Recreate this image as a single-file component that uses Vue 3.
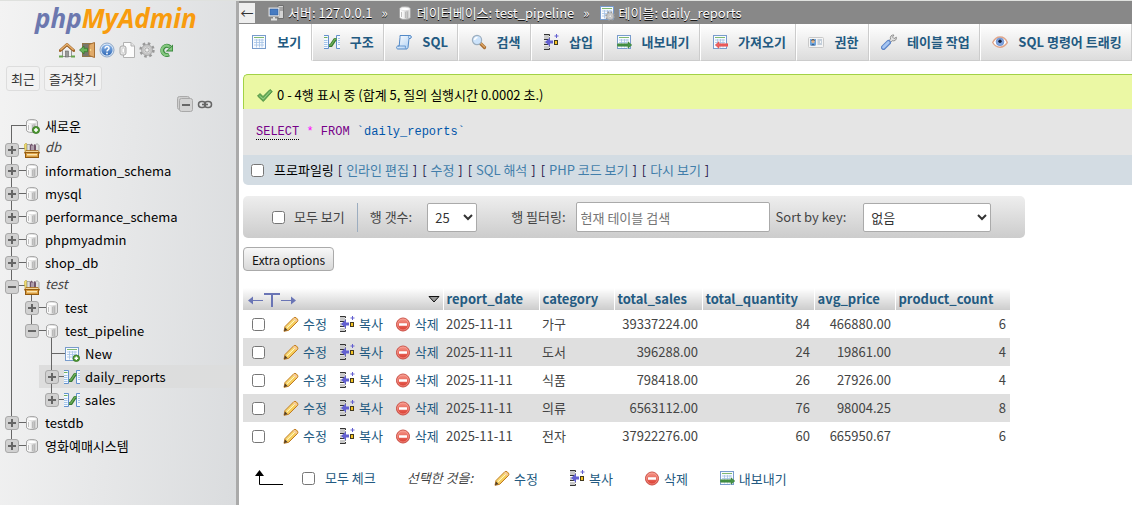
<script setup>
import { ref } from 'vue'

const tree = [
  { name: '새로운', icon: 'dbnew', level: 1, guides: ['start'] },
  { name: 'db', icon: 'group', level: 1, guides: ['full'], toggle: 'plus', group: true },
  { name: 'information_schema', icon: 'db', level: 1, guides: ['full'], toggle: 'plus' },
  { name: 'mysql', icon: 'db', level: 1, guides: ['full'], toggle: 'plus' },
  { name: 'performance_schema', icon: 'db', level: 1, guides: ['full'], toggle: 'plus' },
  { name: 'phpmyadmin', icon: 'db', level: 1, guides: ['full'], toggle: 'plus' },
  { name: 'shop_db', icon: 'db', level: 1, guides: ['full'], toggle: 'plus' },
  { name: 'test', icon: 'group', level: 1, guides: ['full'], toggle: 'minus', group: true, open: true },
  { name: 'test', icon: 'db', level: 2, guides: ['full', 'full'], toggle: 'plus' },
  { name: 'test_pipeline', icon: 'db', level: 2, guides: ['full', 'end'], toggle: 'minus', open: true },
  { name: 'New', icon: 'tablenew', level: 3, guides: ['full', 'none', 'full'] },
  { name: 'daily_reports', icon: 'structure', level: 3, guides: ['full', 'none', 'full'], toggle: 'plus', active: true },
  { name: 'sales', icon: 'structure', level: 3, guides: ['full', 'none', 'end'], toggle: 'plus' },
  { name: 'testdb', icon: 'db', level: 1, guides: ['full'], toggle: 'plus' },
  { name: '영화예매시스템', icon: 'db', level: 1, guides: ['end'], toggle: 'plus' },
]

const shortcuts = [
  { icon: 'home', label: '홈' },
  { icon: 'exit', label: '로그아웃' },
  { icon: 'help', label: '도움말' },
  { icon: 'docs', label: '문서' },
  { icon: 'gear', label: '설정' },
  { icon: 'reload', label: '새로고침' },
]

const tabs = [
  { label: '보기', icon: 'table', active: true },
  { label: '구조', icon: 'structure' },
  { label: 'SQL', icon: 'sql' },
  { label: '검색', icon: 'search' },
  { label: '삽입', icon: 'insert' },
  { label: '내보내기', icon: 'export' },
  { label: '가져오기', icon: 'import' },
  { label: '권한', icon: 'rights' },
  { label: '테이블 작업', icon: 'wrench' },
  { label: 'SQL 명령어 트래킹', icon: 'eye' },
]

const queryLinks = ['인라인 편집', '수정', 'SQL 해석', 'PHP 코드 보기', '다시 보기']

const actions = [
  { icon: 'pencil', label: '수정' },
  { icon: 'insert', label: '복사' },
  { icon: 'delete', label: '삭제' },
]
const bulkActions = [...actions, { icon: 'export', label: '내보내기' }]

const columns = ['report_date', 'category', 'total_sales', 'total_quantity', 'avg_price', 'product_count']
const rows = [
  ['2025-11-11', '가구', '39337224.00', '84', '466880.00', '6'],
  ['2025-11-11', '도서', '396288.00', '24', '19861.00', '4'],
  ['2025-11-11', '식품', '798418.00', '26', '27926.00', '4'],
  ['2025-11-11', '의류', '6563112.00', '76', '98004.25', '8'],
  ['2025-11-11', '전자', '37922276.00', '60', '665950.67', '6'],
]

const filter = ref('')
</script>

<template>
  <svg class="sprite" aria-hidden="true">
    <defs>
      <linearGradient id="g-cyl"><stop offset="0" stop-color="#fff" /><stop offset=".35" stop-color="#f4f4f4" /><stop offset=".7" stop-color="#bdbdbd" /><stop offset="1" stop-color="#f2f2f2" /></linearGradient>
      <linearGradient id="g-red" x2="0" y2="1"><stop offset="0" stop-color="#f79a8c" /><stop offset="1" stop-color="#d9362b" /></linearGradient>
      <linearGradient id="g-blue" x2="0" y2="1"><stop offset="0" stop-color="#8fb8ea" /><stop offset="1" stop-color="#2f68b5" /></linearGradient>
      <linearGradient id="g-scroll" x2="1" y2="1"><stop offset="0" stop-color="#fff" /><stop offset="1" stop-color="#a9cdf3" /></linearGradient>
      <linearGradient id="g-gold" x2="1" y2="1"><stop offset="0" stop-color="#fff0a0" /><stop offset="1" stop-color="#eeb32a" /></linearGradient>
    </defs>

    <symbol id="i-db" viewBox="0 0 16 16">
      <path d="M2.5 4C2.500 2.500 4.500 1.500 8 1.500S13.500 2.500 13.500 4V12C13.500 13.500 11.500 14.500 8 14.500S2.500 13.500 2.500 12Z" fill="url(#g-cyl)" stroke="#a5a5a5" />
      <ellipse cx="8" cy="4" rx="4.600" ry="1.700" fill="#fff" stroke="#d6d6d6" stroke-width=".6" />
      <path d="M8.500 7v6M10.500 7v6M4.500 7v5" stroke="#b3b3b3" stroke-width=".8" />
    </symbol>
    <symbol id="i-dbnew" viewBox="0 0 16 16">
      <use href="#i-db" width="16" height="16" />
      <circle cx="12" cy="12" r="3.600" fill="#4f9a33" stroke="#2f6e1d" stroke-width=".7" />
      <path d="M12 10v4M10 12h4" stroke="#fff" stroke-width="1.500" />
    </symbol>
    <symbol id="i-group" viewBox="0 0 16 16">
      <path d="M0 3L2 1L3 2V9H1Z" fill="#eedb70" stroke="#b09b33" stroke-width=".5" />
      <path d="M3 2.500H6V9H3ZM11.500 3L13 1.500L15 3.500V9H11.500Z" fill="#dedede" stroke="#8d8d8d" stroke-width=".7" />
      <path d="M6 3L7.500 1.500L9 3V9H6ZM9.500 3L11 2L12 4V9H9.500Z" fill="#71546b" />
      <path d="M8 3.500V9" stroke="#e7dfe7" />
      <path d="M2 8.500H14L16 11H0Z" fill="#f3d596" stroke="#a86b17" stroke-width=".8" />
      <rect x="1.500" y="10.500" width="13" height="5" fill="#d99c3f" stroke="#925a10" />
      <rect x="3" y="12" width="10" height="1.500" fill="#fbe5b0" />
    </symbol>
    <symbol id="i-table" viewBox="0 0 16 16">
      <rect x="1.500" y="1.500" width="13" height="13" fill="#f8fbff" stroke="#789ccc" />
      <path d="M3 3.500H13" stroke="#80b970" />
      <path d="M3 6H13M3 8.500H13M3 11H13M5.500 5V13.500M8.500 5V13.500M11 5V13.500" stroke="#a3c2e5" stroke-width=".8" />
    </symbol>
    <symbol id="i-tablenew" viewBox="0 0 16 16">
      <use href="#i-table" width="16" height="16" />
      <circle cx="12.300" cy="12.300" r="3.300" fill="#4f9a33" stroke="#2f6e1d" stroke-width=".7" />
      <path d="M12.300 10.500v3.600M10.500 12.300h3.600" stroke="#fff" stroke-width="1.400" />
    </symbol>
    <symbol id="i-tablegear" viewBox="0 0 16 16">
      <use href="#i-table" width="16" height="16" />
      <g transform="translate(6 6) scale(.65)"><use href="#i-gear" width="16" height="16" /></g>
    </symbol>
    <symbol id="i-structure" viewBox="0 0 16 16">
      <path d="M0 1.500H4.500V14.500H0" fill="#f4f9ff" stroke="#6391cc" />
      <path d="M16 1.500H12.500V14.500H16" fill="#f4f9ff" stroke="#6391cc" />
      <path d="M0 3.500H3.500" stroke="#70b15d" />
      <path d="M0 6.500H3.500M0 8.500H3.500M0 10.500H3.500M0 12.500H3.500M14 4.500H16M14 6.500H16M14 8.500H16M14 10.500H16" stroke="#8fb6e5" stroke-width=".8" />
      <path d="M5 11.500H7L11 5.500H12.500" fill="none" stroke="#37792f" stroke-width="3.200" stroke-linejoin="round" />
      <path d="M5 11.200H7L11 5.200H12.500" fill="none" stroke="#6fb35c" stroke-width="1.200" stroke-linejoin="round" />
    </symbol>
    <symbol id="i-sql" viewBox="0 0 16 16">
      <path d="M4 1.500H14C15.800 1.500 15.800 4.500 14 4.500H13L12 13.500C11.800 14.500 11 15 10 15H2C0 15 .2 12 2 12H3.200L4 3.500Z" fill="url(#g-scroll)" stroke="#5289c7" />
      <path d="M13 4.500C12.300 3.800 12.300 2.500 13.200 1.800M2 12H9.500C9.100 13 9.400 14.500 10.400 14.800" fill="none" stroke="#5289c7" stroke-width=".8" />
    </symbol>
    <symbol id="i-search" viewBox="0 0 16 16">
      <path d="M9.500 9.500L13.500 13.500" stroke="#a86d32" stroke-width="3.200" stroke-linecap="round" />
      <path d="M9.700 9.300L13.500 13" stroke="#dda664" stroke-width="1.300" stroke-linecap="round" />
      <circle cx="6" cy="6" r="4.600" fill="#cce3fb" stroke="#9caebf" stroke-width="1.200" />
      <path d="M3.500 6Q4 3.500 6.500 3.500" fill="none" stroke="#fff" stroke-width="1.500" />
    </symbol>
    <symbol id="i-insert" viewBox="0 0 16 16">
      <path d="M1 1H6V5H1ZM1 12H6V16H1ZM1 7H3V10H1Z" fill="#c9c9c9" />
      <path d="M1 .5H6.500V2M1 5.500H5M6.500 3.500V5M1 10.500H5M6.500 11V12.500M1 15.500H6.500V14" fill="none" stroke="#333" />
      <path d="M2 8L7 3.500V6.500H10V9.500H7V12.500Z" fill="#6260d0" />
      <rect x="11.500" y="6.500" width="3" height="4" fill="#f6c321" stroke="#433b22" />
      <path d="M13.500 0V4M11.500 2H15.500" stroke="#625fd0" />
    </symbol>
    <symbol id="i-export" viewBox="0 0 16 16">
      <use href="#i-table" width="16" height="16" />
      <path d="M1.500 9.500H11V7L15.800 11L11 15V12.500H1.500Z" fill="#fff" opacity=".75" />
      <path d="M1.500 9.800H12V7.800L15.800 11L12 14.200V12.200H1.500Z" fill="#469345" stroke="#28722d" stroke-width=".5" />
    </symbol>
    <symbol id="i-import" viewBox="0 0 16 16">
      <use href="#i-table" width="16" height="16" />
      <path d="M16 9.800V12.500H7.500V15L2.500 11.200L7.500 7.500V9.800Z" fill="#fff" opacity=".75" />
      <path d="M16 9.800V12.200H7V14.300L3.300 11L7 7.700V9.800Z" fill="#ef5f5f" stroke="#d13b3b" stroke-width=".5" />
    </symbol>
    <symbol id="i-rights" viewBox="0 0 16 16">
      <rect x=".5" y="3.500" width="15" height="10" rx="1" fill="#f5f5f5" stroke="#c9c9c9" />
      <rect x="2" y="5" width="6" height="6.500" fill="#6ea4dc" />
      <circle cx="5" cy="7.500" r="1.600" fill="#e5b384" /><path d="M3.500 6.500Q5 4.500 6.500 6.500" stroke="#65421f" fill="none" /><path d="M3 11.500Q5 8 7 11.500Z" fill="#345e91" />
      <path d="M9.500 6H14M9.500 8H12M13 8H14M9.500 10H14" stroke="#91a8c0" />
    </symbol>
    <symbol id="i-wrench" viewBox="0 0 16 16">
      <path d="M7 7.500L9.500 5C8.700 2.700 10.500.5 13 1L11.500 3L13 4.600L15.400 3.200C15.800 6 13.500 7.500 11.200 6.700L8.700 9.200Z" fill="#e0e0e0" stroke="#888" stroke-width=".9" />
      <path d="M2.500 13.500L7.500 8.500" stroke="#5a83c7" stroke-width="5" stroke-linecap="round" /><path d="M2.500 13.200L7.300 8.500" stroke="#a5c5f2" stroke-width="2.800" stroke-linecap="round" />
    </symbol>
    <symbol id="i-eye" viewBox="0 0 16 16">
      <path d="M.7 8.500C3 4 5.500 3 8 3S13.500 4 15.300 8.500C13 12 10.500 13.200 8 13.200S2.800 12 .7 8.500Z" fill="#fff" stroke="#dfa58a" stroke-width="1.400" />
      <circle cx="8" cy="7.800" r="3.900" fill="#7fa4e0" stroke="#5d82c5" stroke-width=".6" /><circle cx="8" cy="7.300" r="1.700" fill="#15213c" />
    </symbol>
    <symbol id="i-pencil" viewBox="0 0 16 16">
      <path d="M1 15.300L2 10.500L10.500 2Q12 .7 13.200 1.800L14.500 3.200Q15.500 4.500 14 6L5.700 14.300Z" fill="url(#g-gold)" stroke="#c07a20" />
      <path d="M11.500 1.800L14.300 4.700L13.300 6L10 2.900Z" fill="#f6c7a0" />
      <path d="M4 11.800L11.700 4.300" stroke="#fffad0" /><path d="M1 15.300L2 11.500L4.500 14Z" fill="#4e3c29" />
    </symbol>
    <symbol id="i-delete" viewBox="0 0 16 16">
      <circle cx="8" cy="8.500" r="6.500" fill="url(#g-red)" stroke="#c94d43" /><circle cx="8" cy="8.500" r="5.500" fill="none" stroke="#f6aaa0" stroke-width=".6" />
      <rect x="4" y="7.200" width="8" height="2.600" rx=".4" fill="#fff" />
    </symbol>
    <symbol id="i-home" viewBox="0 0 16 16">
      <path d="M3.500 8V14.500H12.500V8L8 4Z" fill="#eee" stroke="#969696" />
      <rect x="6.500" y="9" width="3" height="6" fill="#999" stroke="#666" stroke-width=".6" />
      <path d="M1.300 8.500L8 2.500L14.700 8.500" fill="none" stroke="#9d6026" stroke-width="3" stroke-linejoin="round" stroke-linecap="round" /><path d="M1.500 8L8 2.300L14.500 8" fill="none" stroke="#e6b06c" stroke-width="1.400" />
      <path d="M0 14.500H4M12 14.500H16" stroke="#67a34d" stroke-width="2" />
    </symbol>
    <symbol id="i-exit" viewBox="0 0 16 16">
      <rect x="3.500" y="1.500" width="11" height="13" fill="#77776c" stroke="#8e7549" />
      <path d="M10 2.500L15.500 .5V15.500L10 13.500Z" fill="#e0aa69" stroke="#a66f34" /><circle cx="11.500" cy="8" r=".8" fill="#fff1a0" />
      <path d="M.5 8L5 4V6.300H8.500V9.700H5V12Z" fill="#69b45a" stroke="#367b2d" stroke-width=".8" />
    </symbol>
    <symbol id="i-help" viewBox="0 0 16 16">
      <circle cx="8" cy="8" r="7" fill="#dce8f6" stroke="#7796bd" stroke-width=".8" /><circle cx="8" cy="8" r="5.600" fill="url(#g-blue)" />
      <path d="M6 6.500C6 3.700 10.300 4 10 6.500C9.800 7.900 8 7.800 8 9.500" fill="none" stroke="#fff" stroke-width="1.500" /><circle cx="8" cy="11.500" r=".9" fill="#fff" />
    </symbol>
    <symbol id="i-docs" viewBox="0 0 16 16">
      <path d="M4.500.5H12L15.500 4V15.500H4.500Z" fill="#fcfcfc" stroke="#b2b2b2" /><path d="M12 .5V4H15.500" fill="#e5e5e5" stroke="#b2b2b2" />
      <rect x="1" y="4" width="6" height="9" rx="2" fill="#e8e8e8" stroke="#a9a9a9" /><rect x="3" y="6" width="2.500" height="5" rx="1" fill="#fff" stroke="#b9b9b9" stroke-width=".6" />
    </symbol>
    <symbol id="i-gear" viewBox="0 0 16 16">
      <circle cx="8" cy="8" r="6.400" fill="none" stroke="#999" stroke-width="2.600" stroke-dasharray="2.500 2.526" />
      <circle cx="8" cy="8" r="4.200" fill="#eee" stroke="#c6c6c6" stroke-width="2.600" /><circle cx="8" cy="8" r="5.500" fill="none" stroke="#949494" stroke-width=".6" /><circle cx="8" cy="8" r="2.200" fill="#eee" stroke="#929292" stroke-width=".8" />
    </symbol>
    <symbol id="i-reload" viewBox="0 0 16 16">
      <path d="M10 12.500A4.600 4.600 0 1 1 11 5" fill="none" stroke="#37883b" stroke-width="4" /><path d="M6.500 9.500H14V2.500Z" fill="#37883b" />
      <path d="M9.500 12.500A4.600 4.600 0 1 1 10.500 4.800" fill="none" stroke="#84c77f" stroke-width="2.400" /><path d="M8.500 8.600H13.200V4.500Z" fill="#84c77f" />
    </symbol>
    <symbol id="i-server" viewBox="0 0 16 16">
      <path d="M10 .5H15.500V13.500H10Z" fill="#d4d4d4" stroke="#6f6f6f" /><path d="M11 3H15M11 5H15" stroke="#777" />
      <rect x=".5" y="2.500" width="11" height="9" rx="1" fill="#e8e8e8" stroke="#b1b1b1" /><rect x="2" y="4" width="8" height="6" fill="#477bc1" stroke="#2d5a9e" stroke-width=".6" />
      <path d="M6 12V14M3 14.500H9" stroke="#ddd" stroke-width="2" />
    </symbol>
    <symbol id="i-check" viewBox="0 0 16 16">
      <path d="M.5 9L3 6.500L6 9.500L13 2.500L15.300 4.500L6.300 14.500Z" fill="#67ad59" stroke="#3f8539" stroke-width=".8" /><path d="M2.500 9L6.300 12L13.500 4" fill="none" stroke="#a3d58f" stroke-width=".8" />
    </symbol>
    <symbol id="i-plus" viewBox="0 0 16 16">
      <rect x="1.500" y="1.500" width="13" height="13" rx="2.500" fill="#d1d1d1" stroke="#a9a9a9" /><path d="M4 8H12M8 4V12" stroke="#666" stroke-width="2" />
    </symbol>
    <symbol id="i-minus" viewBox="0 0 16 16">
      <rect x="1.500" y="1.500" width="13" height="13" rx="2.500" fill="#d1d1d1" stroke="#a9a9a9" /><path d="M4 8H12" stroke="#666" stroke-width="2" />
    </symbol>
    <symbol id="i-collapse" viewBox="0 0 16 16">
      <rect x=".5" y=".5" width="12" height="13" rx="2" fill="#cfcfcf" stroke="#aaa" /><rect x="2.500" y="2.500" width="13" height="13" rx="2" fill="#d3d3d3" stroke="#a9a9a9" /><path d="M5 9H13" stroke="#666" stroke-width="2" />
    </symbol>
    <symbol id="i-link" viewBox="0 0 16 16">
      <rect x="1.500" y="5.500" width="7" height="6" rx="3" fill="none" stroke="#666" stroke-width="1.500" /><rect x="7.500" y="5.500" width="7" height="6" rx="3" fill="none" stroke="#666" stroke-width="1.500" /><path d="M5 8.500H11" stroke="#666" stroke-width="1.600" />
    </symbol>
  </svg>

  <div class="page">
    <aside class="sidebar">
      <a href="#" class="logo"><span>php</span>MyAdmin</a>
      <nav class="shortcuts">
        <a v-for="s in shortcuts" :key="s.icon" href="#" :aria-label="s.label"><svg class="icon"><use :href="'#i-' + s.icon" /></svg></a>
      </nav>
      <div class="quick">
        <button type="button">최근</button>
        <button type="button">즐겨찾기</button>
      </div>
      <div class="tree-tools">
        <a href="#" aria-label="모두 접기"><svg class="icon"><use href="#i-collapse" /></svg></a>
        <a href="#" aria-label="연결"><svg class="icon"><use href="#i-link" /></svg></a>
      </div>
      <ul class="tree">
        <li v-for="(n, i) in tree" :key="i" :class="{ group: n.group, active: n.active }">
          <span v-for="(g, k) in n.guides" :key="k" class="cell" :class="[g, { branch: k === n.level - 1 }]">
            <a v-if="n.toggle && k === n.level - 1" href="#" class="toggle" :aria-label="n.name"><svg class="icon"><use :href="'#i-' + n.toggle" /></svg></a>
          </span>
          <span class="cell node" :class="{ open: n.open }"><svg class="icon"><use :href="'#i-' + n.icon" /></svg></span>
          <a href="#" class="name">{{ n.name }}</a>
        </li>
      </ul>
    </aside>

    <main class="main">
      <header class="crumbs">
        <button type="button" class="back" aria-label="패널 숨기기">←</button>
        <a href="#"><svg class="icon"><use href="#i-server" /></svg>서버: 127.0.0.1</a>
        <span class="sep">»</span>
        <a href="#"><svg class="icon"><use href="#i-db" /></svg>데이터베이스: test_pipeline</a>
        <span class="sep">»</span>
        <a href="#"><svg class="icon"><use href="#i-tablegear" /></svg>테이블: daily_reports</a>
      </header>
      <nav class="tabs">
        <a v-for="t in tabs" :key="t.label" href="#" :class="{ active: t.active }"><svg class="icon"><use :href="'#i-' + t.icon" /></svg>{{ t.label }}</a>
      </nav>

      <div class="content">
        <section class="result">
          <div class="success"><svg class="icon"><use href="#i-check" /></svg>0 - 4행 표시 중 (합계 5, 질의 실행시간 0.0002 초.)</div>
          <pre class="query"><a href="#" class="kw">SELECT</a> <span class="op">*</span> <span class="word">FROM</span> <span class="ident">`daily_reports`</span></pre>
          <div class="query-tools">
            <input id="profiling" type="checkbox"><label for="profiling">프로파일링</label>
            <span v-for="l in queryLinks" :key="l" class="bracket">[ <a href="#">{{ l }}</a> ]</span>
          </div>
        </section>

        <form class="navigation" @submit.prevent>
          <label class="all"><input type="checkbox">모두 보기</label>
          <label class="count">행 갯수:<select><option>25</option><option>50</option></select></label>
          <label class="filter">행 필터링:<input v-model="filter" type="text" placeholder="현재 테이블 검색"></label>
          <label class="sort">Sort by key:<select><option>없음</option></select></label>
        </form>

        <button type="button" class="extra">Extra options</button>

        <table>
          <colgroup><col class="c-actions"><col v-for="c in columns" :key="c" :class="'c-' + c"></colgroup>
          <thead>
            <tr>
              <th>
                <div class="head-tools">
                  <svg class="full-text" viewBox="0 0 48 16"><path d="M1 9.500H15M33 9.500H47" stroke="#6a75b5" /><path d="M0 9.500L5 5.500V13.500ZM48 9.500L43 5.500V13.500Z" fill="#6a75b5" /><path d="M16 3H32M24 3V16" stroke="#6a75b5" stroke-width="2" /></svg>
                  <svg class="sort-mark" viewBox="0 0 12 7"><path d="M1 .5H11L6 6Z" fill="#999" stroke="#111" /></svg>
                </div>
              </th>
              <th v-for="c in columns" :key="c"><a href="#">{{ c }}</a></th>
            </tr>
          </thead>
          <tbody>
            <tr v-for="(r, i) in rows" :key="i">
              <td>
                <div class="row-actions">
                  <input type="checkbox" :aria-label="r[1]">
                  <a v-for="a in actions" :key="a.icon" href="#"><svg class="icon"><use :href="'#i-' + a.icon" /></svg>{{ a.label }}</a>
                </div>
              </td>
              <td v-for="(v, k) in r" :key="k" :class="{ num: k > 1 }">{{ v }}</td>
            </tr>
          </tbody>
        </table>

        <div class="bulk">
          <svg class="up" viewBox="0 0 28 16"><path d="M4.500 3V14.500H28" fill="none" stroke="#000" /><path d="M0 6L4.500 0L9 6Z" /></svg>
          <label><input type="checkbox">모두 체크</label>
          <em>선택한 것을:</em>
          <button v-for="a in bulkActions" :key="a.icon" type="button"><svg class="icon"><use :href="'#i-' + a.icon" /></svg>{{ a.label }}</button>
        </div>
      </div>
    </main>
  </div>
</template>

<style>
body { margin: 0; background: #fff; overflow: hidden; }
</style>

<style scoped>
.sprite { position: absolute; width: 0; height: 0; }
.page, .page button, .page input, .page select { font-family: "Noto Sans CJK KR", "Noto Sans", sans-serif; font-size: 13px; }
.page { display: flex; min-height: 100vh; box-sizing: border-box; border-top: 1px solid #dfe1de; color: #444; line-height: 20px; }
a { color: #235a81; text-decoration: none; }
.icon { width: 16px; height: 16px; flex: none; display: block; }
input[type="checkbox"] { width: 13px; height: 13px; margin: 0; flex: none; }

.sidebar { flex: none; width: 236px; border-right: 3px solid #aaa; background: linear-gradient(95deg, #f3f3f3, #dadcde); }
.logo { display: block; height: 34px; line-height: 34px; padding-left: 35px; font-family: "Open Sans", "Noto Sans", sans-serif; font-size: 26px; font-weight: 700; font-style: italic; color: #f89c0e; }
.logo span { color: #6c78af; }
.shortcuts { display: flex; gap: 4px; padding: 7px 0 0 59px; }
.quick { display: flex; gap: 4px; padding: 8px 0 0 6px; }
.quick button { height: 25px; padding: 0 4px; border: 1px solid #ddd; border-radius: 3px; background: #f2f2f2; color: #333; }
.tree-tools { display: flex; gap: 4px; padding: 5px 0 0 177px; }
.tree { list-style: none; margin: 0; padding: 2px 0 0; }
.tree li { display: flex; height: 23px; padding-left: 2px; }
.tree li.group { height: 22px; }
.tree li.active { background: linear-gradient(90deg, #ddd, #dcdddd) no-repeat 39px 0; }
.cell { position: relative; display: flex; align-items: center; justify-content: center; width: 20px; flex: none; }
.group .cell { padding-top: 3px; box-sizing: border-box; }
.cell::before { content: ""; position: absolute; left: 9px; width: 1px; top: 0; bottom: 0; background: #666; }
.cell.none::before, .cell.node::before { display: none; }
.cell.start::before { top: 11px; }
.cell.end::before { bottom: 11px; }
.cell.node.open::before { display: block; top: 18px; }
.cell.branch::after { content: ""; position: absolute; left: 9px; width: 15px; top: 11px; height: 1px; background: #666; }
.toggle { position: relative; z-index: 1; }
.node .icon { position: relative; }
.name { margin-left: 3px; line-height: 24px; color: #000; }
.group .name { color: #444; font-style: italic; line-height: 19px; }

.main { flex: 1; min-width: 0; }
.crumbs { display: flex; align-items: center; height: 23px; background: #888; white-space: nowrap; }
.crumbs a { display: flex; align-items: center; gap: 4px; color: #fff; text-shadow: 0 1px 0 #000; }
.sep { padding: 0 9px; color: #fff; text-shadow: 0 1px 0 #000; }
.crumbs .back { width: 16px; height: 20px; margin-right: 13px; padding: 0; border: 0; background: #eee; color: #333; line-height: 20px; }
.tabs { display: flex; height: 37px; white-space: nowrap; }
.tabs a { display: flex; align-items: center; justify-content: center; gap: 10px; flex: 1 0 auto; padding: 0 9px 0 11px; border-left: 1px solid #fff; border-right: 1px solid #ccc; border-bottom: 1px solid #ccc; background: linear-gradient(#fff, #dcdcdc); font-weight: 700; box-sizing: border-box; }
.tabs a.active { background: #fff; border-bottom-color: #fff; }

.content { padding: 13px 0 0 4px; }
.success { display: flex; align-items: center; gap: 4px; height: 35px; padding: 6px 13px 0; box-sizing: border-box; border-top: 1px solid #a2d246; border-left: 1px solid #a2d246; border-radius: 5px 0 0 0; background: #ebf8a4; color: #000; }
.query { height: 46px; margin: 0; padding: 13px; box-sizing: border-box; background: #e5e5e5; font-family: "Liberation Mono", monospace; font-size: 12px; line-height: 20px; }
.kw { color: #708; border-bottom: 1px dotted #000; }
.word { color: #708; }
.op { color: #f0f; }
.ident { color: #05a; }
.query-tools { display: flex; align-items: center; height: 30px; padding: 0 8px; border-radius: 0 0 0 5px; background: #d3dce3; color: #000; white-space: nowrap; }
.query-tools label { padding: 0 4px 0 10px; }
.bracket { margin-right: 5px; color: #214; }
.bracket a { padding: 0 1px; color: #427eaa; }

.navigation { display: flex; align-items: center; width: 782px; height: 42px; margin-top: 11px; padding-left: 29px; box-sizing: border-box; border-radius: 5px; background: linear-gradient(#eee, #ccc); white-space: nowrap; }
.navigation label { display: flex; align-items: center; }
.all { gap: 9px; padding-right: 12px; }
.all + .count { border-left: 1px solid #9cadc0; padding-left: 12px; line-height: 22px; }
.navigation select { height: 29px; border: 1px solid #aaa; border-radius: 2px; background: #fff; color: #333; padding: 0 3px; }
.count select { width: 50px; margin-left: 15px; }
.filter { margin-left: 34px; }
.filter input { width: 194px; height: 30px; margin-left: 10px; padding: 0 4px; box-sizing: border-box; border: 1px solid #aaa; border-radius: 2px; }
.sort { margin-left: 6px; }
.sort select { width: 128px; margin-left: 17px; }

.page .extra { display: block; height: 24px; margin-top: 9px; padding: 0 8px; border: 1px solid #aaa; border-radius: 4px; background: linear-gradient(#f8f8f8, #d8d8d8); font-size: 12px; color: #111; }

table { table-layout: fixed; width: 767px; margin-top: 17px; border-collapse: collapse; }
.c-actions { width: 200px; }
.c-report_date { width: 96px; }
.c-category { width: 75px; }
.c-total_sales { width: 88px; }
.c-total_quantity { width: 112px; }
.c-avg_price { width: 81px; }
.c-product_count { width: 115px; }
th { height: 22px; padding: 0 3px; border-right: 1px solid #fff; background: linear-gradient(#fff, #ccc); text-align: left; font-weight: 700; }
th:last-child { border-right: 0; }
td { height: 28px; padding: 0 3px; }
td.num { padding-right: 4px; text-align: right; }
tbody tr:nth-child(even) { background: #dfdfdf; }
.head-tools { display: flex; align-items: center; justify-content: space-between; padding-left: 2px; }
.full-text { width: 48px; height: 16px; }
.sort-mark { width: 12px; height: 7px; }
.row-actions { display: flex; align-items: center; gap: 12px; padding-left: 6px; }
.row-actions input { margin-right: 6px; }
.row-actions a { display: flex; align-items: center; gap: 4px; white-space: nowrap; }

.bulk { display: flex; align-items: center; margin-top: 18px; padding-left: 12px; white-space: nowrap; }
.up { width: 28px; height: 16px; }
.bulk label { display: flex; align-items: center; gap: 10px; margin-left: 19px; color: #235a81; }
.bulk em { margin: 0 21px 0 31px; }
.bulk button { display: flex; align-items: center; gap: 4px; margin-right: 31px; padding: 0; border: 0; background: none; color: #235a81; }
</style>
